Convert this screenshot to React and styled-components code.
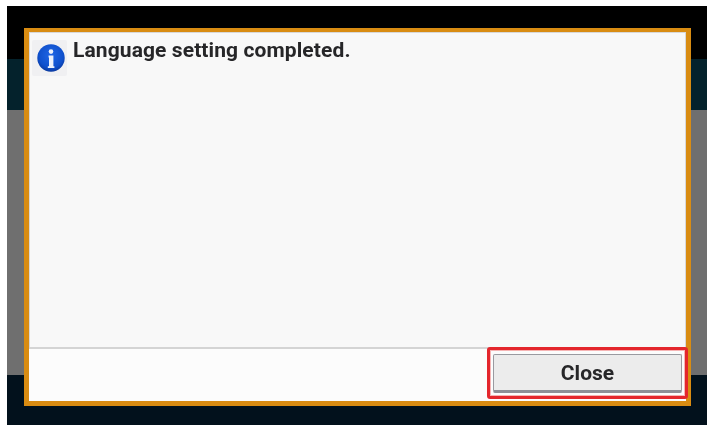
import React from "react";
import styled, { createGlobalStyle } from "styled-components";

const Global = createGlobalStyle`
  html, body { margin: 0; padding: 0; background: #fff; }
  body { font-family: "Roboto", "Liberation Sans", sans-serif; overflow: hidden; }
`;

const Page = styled.div`
  width: 707px;
  height: 428px;
  padding: 6px 0 3px 7px;
  box-sizing: border-box;
`;

const Screen = styled.div`
  position: relative;
  height: 100%;
  display: flex;
  flex-direction: column;
  filter: blur(0.5px);
`;

const Band = styled.div`
  height: ${(p) => p.$h}px;
  flex: ${(p) => (p.$h ? "none" : "1")};
  background: ${(p) => p.$bg};
`;

const Dialog = styled.div`
  position: absolute;
  left: 17px;
  top: 22px;
  width: 667px;
  height: 378px;
  box-sizing: border-box;
  border: 5px solid #d98c12;
  border-top-width: 4px;
  background: #f8f8f8;
  display: flex;
  flex-direction: column;
  box-shadow: inset 0 0 0 1px #d8d8d8;
`;

const Message = styled.div`
  flex: 1;
  display: flex;
  align-items: flex-start;
  gap: 6px;
  padding: 8px 0 0 3px;
`;

const IconTile = styled.div`
  width: 35px;
  height: 36px;
  flex: none;
  box-sizing: border-box;
  padding-left: 2px;
  display: flex;
  align-items: center;
  justify-content: center;
  background: #f0f0f2;
  border-radius: 2px;
`;

const MessageText = styled.div`
  font-size: 21px;
  line-height: 24px;
  font-weight: 700;
  letter-spacing: 0.1px;
  color: #262628;
  margin-top: -2px;
`;

const Footer = styled.div`
  height: 54px;
  flex: none;
  box-sizing: border-box;
  border-top: 2px solid #d4d4d4;
  background: #fcfcfc;
  display: flex;
  justify-content: flex-end;
  align-items: flex-start;
  padding: 5px 4px 0 0;
`;

const Button = styled.button`
  position: relative;
  width: 189px;
  height: 39px;
  box-sizing: border-box;
  border: 1px solid #9a9aa0;
  border-bottom: 3px solid #8e8e96;
  border-radius: 2px;
  background: #ececec;
  font-family: inherit;
  font-size: 21px;
  font-weight: 700;
  color: #262628;
  padding: 0;
`;

const Highlight = styled.div`
  position: absolute;
  left: -7px;
  top: -8px;
  right: -7px;
  bottom: -9px;
  box-sizing: border-box;
  border: 3px solid #e4262c;
  border-radius: 3px;
  box-shadow: inset 0 0 0 1px #f6b4b4;
  pointer-events: none;
`;

const InfoIcon = () => (
  <svg width="28" height="28" viewBox="0 0 28 28" aria-hidden="true">
    <defs>
      <radialGradient id="blue" cx="50%" cy="40%" r="60%">
        <stop offset="0%" stopColor="#1f66e6" />
        <stop offset="75%" stopColor="#0f50cc" />
        <stop offset="100%" stopColor="#0a3aa0" />
      </radialGradient>
    </defs>
    <circle cx="14" cy="14" r="13.7" fill="url(#blue)" />
    <ellipse cx="14" cy="7.6" rx="2.3" ry="2.4" fill="#eef2fb" />
    <path d="M11.6 11.6h4.8v10.6h1v1.8h-6.6v-1.8h1.2v-8.8h-.4z" fill="#eef2fb" />
  </svg>
);

export default function App() {
  return (
    <Page>
      <Global />
      <Screen>
        <Band $h={53} $bg="#000" />
        <Band $h={51} $bg="#04222c" />
        <Band $bg="#6f6f6f" />
        <Band $h={50} $bg="#02111c" />
        <Dialog>
          <Message>
            <IconTile>
              <InfoIcon />
            </IconTile>
            <MessageText>Language setting completed.</MessageText>
          </Message>
          <Footer>
            <Button>
              Close
              <Highlight />
            </Button>
          </Footer>
        </Dialog>
      </Screen>
    </Page>
  );
}
